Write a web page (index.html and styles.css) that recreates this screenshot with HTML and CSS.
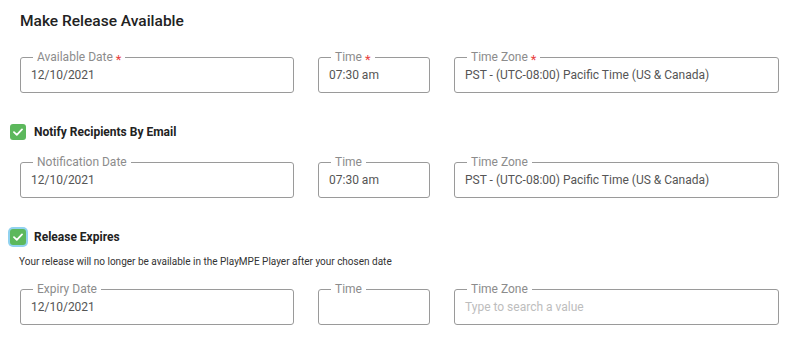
FILE: index.html
```html
<!DOCTYPE html>
<html lang="en">
<head>
    <meta charset="UTF-8">
    <title>Make Release Available</title>
    <link rel="stylesheet" href="styles.css">
</head>
<body>
<div class="panel">
    <h2 class="title">Make Release Available</h2>

    <div class="row row-first">
        <fieldset class="field f-date">
            <legend>Available Date<span class="req">*</span></legend>
            <div class="value">12/10/2021</div>
        </fieldset>
        <fieldset class="field f-time">
            <legend>Time<span class="req">*</span></legend>
            <div class="value">07:30 am</div>
        </fieldset>
        <fieldset class="field f-zone">
            <legend>Time Zone<span class="req">*</span></legend>
            <div class="value">PST - (UTC-08:00) Pacific Time (US &amp; Canada)</div>
        </fieldset>
    </div>

    <label class="check check-notify">
        <span class="box">
            <svg width="10" height="8" viewBox="0 0 10 8"><path d="M1 4.2 L3.8 6.8 L9 1.4" fill="none" stroke="#fff" stroke-width="1.8" stroke-linecap="round" stroke-linejoin="round"/></svg>
        </span>
        Notify Recipients By Email
    </label>

    <div class="row">
        <fieldset class="field f-date">
            <legend>Notification Date</legend>
            <div class="value">12/10/2021</div>
        </fieldset>
        <fieldset class="field f-time">
            <legend>Time</legend>
            <div class="value">07:30 am</div>
        </fieldset>
        <fieldset class="field f-zone">
            <legend>Time Zone</legend>
            <div class="value">PST - (UTC-08:00) Pacific Time (US &amp; Canada)</div>
        </fieldset>
    </div>

    <label class="check check-expire">
        <span class="box focused">
            <svg width="10" height="8" viewBox="0 0 10 8"><path d="M1 4.2 L3.8 6.8 L9 1.4" fill="none" stroke="#fff" stroke-width="1.8" stroke-linecap="round" stroke-linejoin="round"/></svg>
        </span>
        Release Expires
    </label>
    <p class="hint">Your release will no longer be available in the PlayMPE Player after your chosen date</p>

    <div class="row">
        <fieldset class="field f-date">
            <legend>Expiry Date</legend>
            <div class="value">12/10/2021</div>
        </fieldset>
        <fieldset class="field f-time">
            <legend>Time</legend>
            <div class="value"></div>
        </fieldset>
        <fieldset class="field f-zone">
            <legend>Time Zone</legend>
            <div class="value placeholder">Type to search a value</div>
        </fieldset>
    </div>
</div>
</body>
</html>
```

FILE: styles.css
```css
*{
    margin: 0;
    padding: 0;
    box-sizing: border-box;
}
body{
    background: #fff;
    font-family: Roboto, "Liberation Sans", sans-serif;
    color: #222;
}
.panel{
    padding: 11px 0 0 20px;
}
.title{
    font-size: 15.5px;
    font-weight: 500;
    line-height: 20px;
    color: #222;
}
.row{
    display: flex;
    gap: 24px;
}
.row-first{
    margin-top: 19px;
}
.field{
    border: 1px solid #9a9a9a;
    border-radius: 3px;
    padding: 0 10px 6px;
    min-width: 0;
}
.field legend{
    font-size: 12px;
    line-height: 14px;
    color: #8c8c8c;
    padding: 0 4px;
    margin-left: 2px;
}
.req{
    color: #e8423f;
    font-size: 13px;
    margin-left: 3px;
    vertical-align: -3px;
    line-height: 0;
}
.f-date{
    width: 274px;
}
.f-time{
    width: 112px;
}
.f-zone{
    width: 325px;
}
.value{
    font-size: 12px;
    line-height: 22px;
    height: 22px;
    color: #555;
}
.placeholder{
    color: #bdbdbd;
}
.check{
    display: flex;
    align-items: center;
    gap: 8px;
    margin-left: -10px;
    font-size: 12px;
    font-weight: 700;
    color: #222;
    height: 16px;
}
.check-notify{
    margin-top: 31px;
    margin-bottom: 15px;
}
.check-expire{
    margin-top: 31px;
}
.box{
    width: 16px;
    height: 16px;
    border-radius: 3px;
    background: #5cb85c;
    display: flex;
    align-items: center;
    justify-content: center;
}
.box.focused{
    box-shadow: 0 0 0 2px #91d2ef;
}
.hint{
    margin-left: -1px;
    margin-top: 11px;
    margin-bottom: 14px;
    font-size: 10px;
    line-height: 12px;
    color: #333;
}
```
